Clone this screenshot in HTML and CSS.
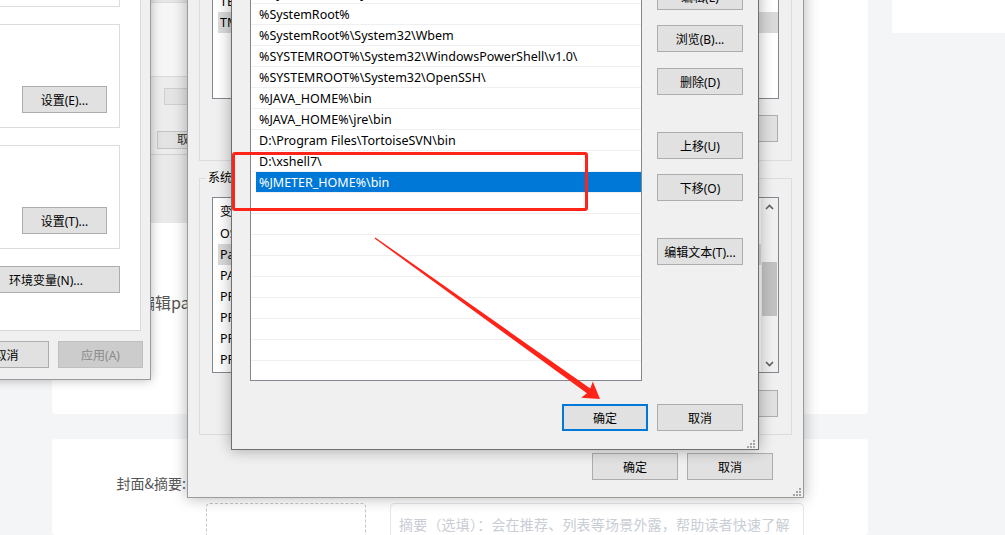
FILE: index.html
```html
<!DOCTYPE html>
<html lang="zh-CN">
<head>
<meta charset="utf-8">
<title>编辑环境变量</title>
<link rel="stylesheet" href="styles.css">
</head>
<body>
<div class="page">
  <div class="main">
    <div class="card card1">
      <span class="form-label">编辑path</span>
    </div>
    <div class="card card2">
      <div class="label2">封面&amp;摘要:</div>
      <div class="cover-col">
        <div class="cover-boxes">
          <div class="cover-upload"></div>
          <div class="abstract">摘要（选填）：会在推荐、列表等场景外露，帮助读者快速了解</div>
        </div>
      </div>
    </div>
  </div>
  <div class="side"><div class="side-box"></div></div>
</div>

<div class="win backwin">
  <div class="bw-top"></div>
  <div class="bw-panel"></div>
  <div class="bw-field"></div>
  <div class="bw-btns"><div class="bw-btn b1"></div><div class="bw-btn b2">取消</div></div>
  <div class="bw-bottom"></div>
</div>

<div class="win sysprops">
  <div class="sp-panel">
    <div class="sp-group g-a"></div>
    <div class="sp-group g-b"><div class="btn">设置(E)...</div></div>
    <div class="sp-group g-c"><div class="btn">设置(T)...</div></div>
    <div class="sp-envrow"><div class="btn wide">环境变量(N)...</div></div>
  </div>
  <div class="sp-bottom">
    <div class="btn">确定</div>
    <div class="btn">取消</div>
    <div class="btn disabled">应用(A)</div>
  </div>
</div>

<div class="win envdlg">
  <div class="grp grp-user">
    <span class="legend">Administrator 的用户变量(U)</span>
    <div class="listview lv-user">
      <div class="lv-body">
        <div class="lv-head"><span class="c1">变量</span><span>值</span></div>
        <div class="lv-row"><span class="c1">OneDrive</span><span>C:\Users\Administrator\OneDrive</span></div>
        <div class="lv-row"><span class="c1">TEMP</span><span>%USERPROFILE%\AppData\Local\Temp</span></div>
        <div class="lv-row sel"><span class="c1">TMP</span><span>%USERPROFILE%\AppData\Local\Temp</span></div>
      </div>
    </div>
    <div class="grp-btns"><div class="btn">新建(N)...</div><div class="btn">编辑(E)...</div><div class="btn">删除(D)</div></div>
  </div>
  <div class="grp grp-sys">
    <span class="legend">系统变量(S)</span>
    <div class="listview lv-sys">
      <div class="lv-body">
        <div class="lv-head"><span class="c1">变量</span><span>值</span></div>
        <div class="lv-row"><span class="c1">OS</span><span>Windows_NT</span></div>
        <div class="lv-row sel"><span class="c1">Path</span><span>C:\Program Files (x86)\Common Files\Oracle\Java\javapath</span></div>
        <div class="lv-row"><span class="c1">PATHEXT</span><span>.COM;.EXE;.BAT;.CMD;.VBS;.VBE;.JS;.JSE;.WSF;.WSH;.MSC</span></div>
        <div class="lv-row"><span class="c1">PROCESSOR_ARCHITECTURE</span><span>AMD64</span></div>
        <div class="lv-row"><span class="c1">PROCESSOR_IDENTIFIER</span><span>Intel64 Family 6</span></div>
        <div class="lv-row"><span class="c1">PROCESSOR_LEVEL</span><span>6</span></div>
        <div class="lv-row"><span class="c1">PROCESSOR_REVISION</span><span>9e0a</span></div>
        <div class="lv-row"><span class="c1">PSModulePath</span><span>%ProgramFiles%\WindowsPowerShell\Modules</span></div>
      </div>
      <div class="vscroll">
        <div class="sb-arrow"><svg width="9" height="6" viewBox="0 0 9 6"><polyline points="1,5 4.5,1.5 8,5" fill="none" stroke="#606060" stroke-width="1.6"/></svg></div>
        <div class="sb-track"><div class="sb-thumb"></div></div>
        <div class="sb-arrow"><svg width="9" height="6" viewBox="0 0 9 6"><polyline points="1,1 4.5,4.5 8,1" fill="none" stroke="#606060" stroke-width="1.6"/></svg></div>
      </div>
    </div>
    <div class="grp-btns"><div class="btn">新建(W)...</div><div class="btn">编辑(I)...</div><div class="btn">删除(L)</div></div>
  </div>
  <div class="env-bottom"><div class="btn">确定</div><div class="btn">取消</div></div>
  <svg class="grip env-grip" width="8" height="8" viewBox="0 0 8 8"><rect x="6" y="0" width="2" height="2"/><rect x="3" y="3" width="2" height="2"/><rect x="6" y="3" width="2" height="2"/><rect x="0" y="6" width="2" height="2"/><rect x="3" y="6" width="2" height="2"/><rect x="6" y="6" width="2" height="2"/></svg>
</div>

<div class="win editdlg">
  <div class="ed-main">
    <div class="ed-list">
      <div class="lrow">C:\Program Files (x86)\Common Files\Oracle\Java\javapath</div>
      <div class="lrow">C:\ProgramData\Oracle\Java\javapath</div>
      <div class="lrow">%SystemRoot%\system32</div>
      <div class="lrow">%SystemRoot%</div>
      <div class="lrow">%SystemRoot%\System32\Wbem</div>
      <div class="lrow">%SYSTEMROOT%\System32\WindowsPowerShell\v1.0\</div>
      <div class="lrow">%SYSTEMROOT%\System32\OpenSSH\</div>
      <div class="lrow">%JAVA_HOME%\bin</div>
      <div class="lrow">%JAVA_HOME%\jre\bin</div>
      <div class="lrow">D:\Program Files\TortoiseSVN\bin</div>
      <div class="lrow">D:\xshell7\</div>
      <div class="lrow sel">%JMETER_HOME%\bin</div>
      <div class="lrow"></div>
      <div class="lrow"></div>
      <div class="lrow"></div>
      <div class="lrow"></div>
      <div class="lrow"></div>
      <div class="lrow"></div>
      <div class="lrow"></div>
      <div class="lrow"></div>
      <div class="lrow"></div>
    </div>
    <div class="ed-btns">
      <div class="btn">新建(N)</div>
      <div class="btn mt16">编辑(E)</div>
      <div class="btn mt15">浏览(B)...</div>
      <div class="btn mt16">删除(D)</div>
      <div class="btn mt37">上移(U)</div>
      <div class="btn mt15">下移(O)</div>
      <div class="btn mt37">编辑文本(T)...</div>
    </div>
  </div>
  <div class="ed-bottom"><div class="btn default">确定</div><div class="btn">取消</div></div>
  <svg class="grip ed-grip" width="8" height="8" viewBox="0 0 8 8"><rect x="6" y="0" width="2" height="2"/><rect x="3" y="3" width="2" height="2"/><rect x="6" y="3" width="2" height="2"/><rect x="0" y="6" width="2" height="2"/><rect x="3" y="6" width="2" height="2"/><rect x="6" y="6" width="2" height="2"/></svg>
</div>

<div class="redbox"></div>
<svg class="arrow" width="1005" height="535" viewBox="0 0 1005 535">
  <polygon points="374.6,238.6 375.4,237.4 590.3,388.5 592.8,381.6 600,399 581.2,397.8 586.9,393.3" fill="#ff2419"/>
</svg>
</body>
</html>
```

FILE: styles.css
```css
* { box-sizing: border-box; }
html, body { margin: 0; padding: 0; }
body {
  width: 1005px;
  height: 535px;
  overflow: hidden;
  position: relative;
  background: #f4f5f7;
  font-family: "Noto Sans", "Noto Sans CJK SC", sans-serif;
}

/* ---------- web page underneath ---------- */
.page { display: flex; padding-left: 52px; height: 535px; overflow: hidden; }
.main { width: 816px; display: flex; flex-direction: column; }
.card { background: #fff; border-radius: 4px; }
.card1 { margin-top: -20px; height: 434px; padding: 310px 0 0 87px; flex: none; }
.form-label {
  font-family: "Noto Sans CJK SC", sans-serif;
  font-size: 16px; line-height: 24px; color: #555;
}
.card2 { margin-top: 25px; flex: 1; display: flex; align-items: flex-start; overflow: hidden; }
.label2 {
  width: 134px; text-align: right; padding-top: 34px;
  font-family: "Noto Sans CJK SC", sans-serif;
  font-size: 14px; line-height: 20px; color: #555;
}
.cover-col { margin-left: 20px; padding-top: 64px; }
.cover-boxes { display: flex; align-items: flex-start; }
.cover-upload { width: 160px; height: 120px; border: 1px dashed #c3c6cc; border-radius: 4px; }
.abstract {
  margin-left: 24px; width: 414px; height: 96px;
  border: 1px solid #e5e6eb; border-radius: 4px;
  padding: 9px 8px;
  font-family: "Noto Sans CJK SC", sans-serif;
  font-size: 14px; line-height: 22px; color: #c9cdd4; white-space: nowrap;
  letter-spacing: 0.2px;
}
.side { margin-left: 24px; flex: 1; }
.side-box { height: 33px; background: #fff; }

/* ---------- windows ---------- */
.win {
  position: absolute;
  background: #f0f0f0;
  font-family: "Noto Sans", "Noto Sans CJK SC", sans-serif;
  font-size: 12px;
  color: #000;
}
.btn {
  display: flex; align-items: center; justify-content: center;
  width: 85px; height: 27px; flex: none;
  background: #e1e1e1; border: 1px solid #adadad;
  font-size: 12px; white-space: nowrap; color: #000;
}
.btn.default { border: 2px solid #0078d7; }
.btn.disabled { background: #cccccc; border-color: #bfbfbf; color: #8a8a8a; }
.grip { position: absolute; fill: #a6a6a6; }

/* window partially behind */
.backwin {
  left: 140px; top: -12px; width: 70px; height: 235px;
  background: #ececec; z-index: 1;
  display: flex; flex-direction: column;
}
.bw-top { height: 14px; background: #e6e6e6; flex: none; }
.bw-panel { height: 75px; background: #f6f6f6; border-top: 1px solid #dcdcdc; border-bottom: 1px solid #d9d9d9; flex: none; }
.bw-field { margin: 11px 0 0 24px; height: 17px; background: #e4e4e4; border: 1px solid #cfcfcf; flex: none; }
.bw-btns { display: flex; margin-top: 26px; height: 18px; flex: none; }
.bw-btn { height: 18px; background: #e3e3e3; border: 1px solid #c4c4c4; font-size: 12px; line-height: 16px; color: #333; }
.bw-btn.b1 { width: 13px; }
.bw-btn.b2 { width: 60px; margin-left: 6px; padding-left: 19px; }
.bw-bottom { margin-top: 5px; flex: 1; border-top: 1px solid #d2d2d2; background: #e9e9e9; }

/* System properties */
.sysprops {
  left: -300px; top: -120px; width: 451px; height: 500px;
  border: 1px solid #9a9a9a;
  padding: 19px 7px 0 9px;
  box-shadow: 0 0 10px rgba(0, 0, 0, 0.28);
  z-index: 2;
}
.sp-panel {
  height: 431px; margin-right: 2px;
  background: #fff; border: 1px solid #d9d9d9;
  padding: 9px 20px 0 0;
  display: flex; flex-direction: column;
}
.sp-group {
  border: 1px solid #dcdcdc;
  display: flex; align-items: flex-end; justify-content: flex-end;
  padding: 0 12px 14px 0; flex: none;
}
.g-a { height: 97px; }
.g-b, .g-c { height: 104px; margin-top: 17px; }
.sp-envrow { margin-top: 17px; display: flex; justify-content: flex-end; }
.btn.wide { width: 148px; }
.sp-bottom { display: flex; justify-content: flex-end; gap: 9px; margin-top: 10px; }

/* Environment variables */
.envdlg {
  left: 187px; top: -100px; width: 617px; height: 598px;
  border: 1px solid #9b9b9b;
  box-shadow: 0 0 14px rgba(0, 0, 0, 0.3);
  z-index: 3;
  display: flex; flex-direction: column;
}
.grp {
  position: relative; flex: none;
  border: 1px solid #dcdcdc;
  margin: 0 11px;
  padding: 18px 12px 0 12px;
}
.grp-user { margin-top: 24px; height: 236px; }
.grp-sys { margin-top: 17px; height: 257px; }
.legend {
  position: absolute; left: 6px; top: -9px;
  padding: 0 2px; background: #f0f0f0;
  font-size: 12px; line-height: 16px; white-space: nowrap;
}
.listview { background: #fff; border: 1px solid #828790; display: flex; overflow: hidden; }
.lv-user { height: 155px; }
.lv-sys { height: 176px; }
.lv-body { flex: 1; min-width: 0; }
.lv-head { height: 25px; display: flex; align-items: center; padding-left: 7px; font-size: 12px; white-space: nowrap; }
.lv-row { height: 21px; display: flex; align-items: center; padding-left: 7px; font-size: 12.5px; white-space: nowrap; }
.lv-row.sel { margin-left: 5px; padding-left: 2px; background: #dadada; }
.c1 { width: 170px; flex: none; overflow: hidden; }
.grp-btns { display: flex; justify-content: flex-end; gap: 10px; margin-top: 16px; padding-right: 1px; }
.grp-sys .grp-btns { margin-top: 17px; }
.vscroll { width: 17px; flex: none; display: flex; flex-direction: column; background: #f0f0f0; }
.sb-arrow { height: 17px; flex: none; display: flex; align-items: center; justify-content: center; }
.sb-track { flex: 1; padding-top: 47px; }
.sb-thumb { height: 54px; margin: 0 1px; background: #c2c2c2; }
.env-bottom { display: flex; justify-content: flex-end; gap: 9px; margin-top: 18px; padding-right: 30px; }
.env-bottom .btn { width: 86px; }
.env-grip { right: 2px; bottom: 1px; }

/* Edit environment variable */
.editdlg {
  left: 231px; top: -80px; width: 528px; height: 530px;
  border: 1px solid #6f6f6f;
  padding: 19px 15px 0 18px;
  box-shadow: 0 0 14px rgba(0, 0, 0, 0.32);
  z-index: 4;
  display: flex; flex-direction: column;
}
.ed-main { display: flex; align-items: flex-start; }
.ed-list {
  width: 392px; height: 441px; flex: none;
  background: #fff; border: 1px solid #828790; overflow: hidden;
}
.lrow {
  height: 21px; border-bottom: 1px solid #efefef;
  padding-left: 8px; padding-top: 1px;
  font-size: 12.5px; line-height: 20px; white-space: nowrap;
}
.lrow.sel { margin-left: 5px; padding-left: 3px; background: #0078d7; color: #fff; }
.ed-btns { margin-left: 15px; display: flex; flex-direction: column; }
.ed-btns .btn { width: 86px; }
.mt15 { margin-top: 15px; }
.mt16 { margin-top: 16px; }
.mt37 { margin-top: 37px; }
.ed-bottom { display: flex; justify-content: flex-end; gap: 9px; margin-top: 23px; }
.ed-bottom .btn { width: 86px; }
.ed-grip { right: 3px; bottom: 1px; }

/* annotations */
.redbox {
  position: absolute; left: 232px; top: 152px;
  width: 356px; height: 59px;
  border: 3px solid #ff2419; border-radius: 3px;
  z-index: 5;
}
.arrow { position: absolute; left: 0; top: 0; z-index: 5; pointer-events: none; }
```
